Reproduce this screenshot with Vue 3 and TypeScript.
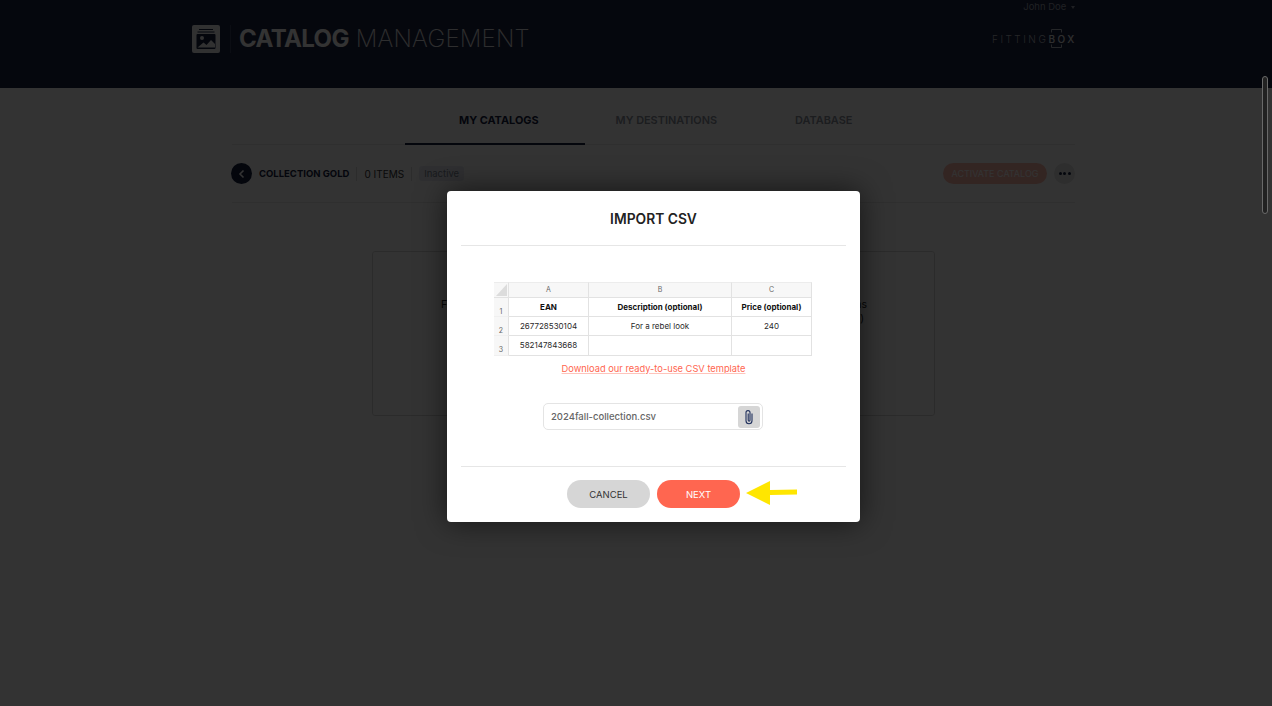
<script setup lang="ts">
interface SheetRow {
  num: number;
  cells: string[];
  bold?: boolean;
}

const tabs = [
  { label: "MY CATALOGS", active: true },
  { label: "MY DESTINATIONS", active: false },
  { label: "DATABASE", active: false },
];

const columns = ["A", "B", "C"];

const rows: SheetRow[] = [
  { num: 1, cells: ["EAN", "Description (optional)", "Price (optional)"], bold: true },
  { num: 2, cells: ["267728530104", "For a rebel look", "240"] },
  { num: 3, cells: ["582147843668", "", ""] },
];
</script>

<template>
  <div class="page">
    <header class="topbar">
      <div class="user">John Doe <span class="caret"></span></div>
      <div class="topbar-row">
        <div class="brand">
          <svg class="brand-icon" width="28" height="28" viewBox="0 0 28 28">
            <rect width="28" height="28" rx="2" fill="#fff" />
            <path d="M7 4.500h14M5.500 7h17" stroke="#14203f" stroke-width="1" fill="none" />
            <rect x="4.500" y="9" width="19" height="15" rx="1" fill="#14203f" />
            <circle cx="10" cy="13" r="2" fill="#fff" />
            <path d="M5.500 22.500l6-5 3 2.500 4.500-5 4 4v3.500z" fill="#fff" />
          </svg>
          <span class="brand-sep"></span>
          <h1 class="brand-title"><b>CATALOG</b> MANAGEMENT</h1>
        </div>
        <div class="fb-logo">
          <span>FITTING</span><span class="fb-box">BOX</span>
          <svg class="fb-frame" width="11" height="19" viewBox="0 0 11 19">
            <path d="M.5 3.500V.5h10v3M.5 15.500v3h10v-3" stroke="#b9bcc6" stroke-width="1" fill="none" />
          </svg>
        </div>
      </div>
    </header>

    <main class="content">
      <nav class="tabs">
        <a v-for="tab in tabs" :key="tab.label" class="tab" :class="{ active: tab.active }">{{ tab.label }}</a>
      </nav>

      <section class="toolbar">
        <span class="back">
          <svg width="12" height="12" viewBox="0 0 12 12">
            <path d="M7.500 2.500L4 6l3.500 3.500" stroke="#fff" stroke-width="1.600" fill="none" />
          </svg>
        </span>
        <strong class="coll-name">COLLECTION GOLD</strong>
        <span class="count">0 ITEMS</span>
        <span class="status">Inactive</span>
        <button class="activate">ACTIVATE CATALOG</button>
        <span class="more"><i></i><i></i><i></i></span>
      </section>

      <!-- mostly hidden by the modal, only the line ends peek out -->
      <section class="empty">
        <p class="empty-line"><span>For</span><span>items</span></p>
        <p class="empty-line second"><span>(optional)</span></p>
      </section>
    </main>

    <div class="overlay">
      <div class="modal">
        <h2 class="modal-title">IMPORT CSV</h2>

        <div class="modal-body">
          <div class="sheet">
            <div class="corner"><i></i></div>
            <div v-for="col in columns" :key="col" class="col-head">{{ col }}</div>
            <template v-for="row in rows" :key="row.num">
              <div class="row-head">{{ row.num }}</div>
              <div v-for="(cell, i) in row.cells" :key="i" class="cell" :class="{ bold: row.bold }">{{ cell }}</div>
            </template>
          </div>
          <a class="template-link">Download our ready-to-use CSV template</a>

          <div class="file-field">
            <span class="file-name">2024fall-collection.csv</span>
            <span class="attach">
              <svg width="12" height="16" viewBox="0 0 12 16">
                <path
                  d="M9 4.500v7.300a3 3 0 0 1-6 0V3.600a2 2 0 0 1 4 0v7.600a.9.9 0 0 1-1.800 0V4.500"
                  stroke="#1f2f5c"
                  stroke-width="1.100"
                  fill="none"
                />
              </svg>
            </span>
          </div>
        </div>

        <div class="modal-foot">
          <button class="btn cancel">CANCEL</button>
          <button class="btn next">NEXT</button>
          <svg class="arrow" width="51" height="26" viewBox="0 0 51 26">
            <path d="M0 13L24 1V10L51 9.500V14.500L24 15V25z" fill="#ffe600" />
          </svg>
        </div>
      </div>
    </div>

    <div class="scroll-thumb"></div>
  </div>
</template>

<style scoped>
.page {
  height: 706px;
  overflow: hidden;
  position: relative;
  background: #fff;
  font-family: Inter, "Open Sans", sans-serif;
  color: #14203f;
}

/* Header */
.topbar {
  height: 88px;
  box-sizing: border-box;
  background: #1c2340;
  padding: 0 197px 0 192px;
  position: relative;
}
.user {
  position: absolute;
  top: 1px;
  right: 197px;
  font-size: 9.500px;
  line-height: 12px;
  color: #9aa0b0;
}
.caret {
  display: inline-block;
  border: 2.500px solid transparent;
  border-top: 3px solid #9aa0b0;
  border-bottom: 0;
  margin: 0 0 1px 2px;
}
.topbar-row {
  padding-top: 25px;
  display: flex;
  align-items: center;
  justify-content: space-between;
}
.brand {
  display: flex;
  align-items: center;
}
.brand-icon {
  opacity: 0.95;
}
.brand-sep {
  width: 1px;
  height: 28px;
  background: #3a4160;
  margin: 0 8px 0 10px;
}
.brand-title {
  margin: 0;
  font-size: 24px;
  line-height: 28px;
  font-weight: 200;
  letter-spacing: 0.200px;
  color: #e4e4e8;
  white-space: nowrap;
}
.brand-title b {
  font-weight: 700;
  color: #fff;
  letter-spacing: -0.600px;
}
.fb-logo {
  position: relative;
  width: 84px;
  margin-right: -1px;
  font-size: 10px;
  letter-spacing: 2.500px;
  line-height: 28px;
  color: #b9bcc6;
  font-weight: 300;
  white-space: nowrap;
}
.fb-box {
  font-weight: 500;
  color: #e8e8ec;
}
.fb-frame {
  position: absolute;
  left: 59px;
  top: 4px;
}

/* Page content */
.content {
  width: 843px;
  margin-left: 232px;
}
.tabs {
  display: flex;
  height: 57px;
  box-sizing: border-box;
  border-bottom: 1px solid #e8e8e8;
  padding-left: 173px;
}
.tab {
  padding: 25px 39px 0;
  font-size: 10.900px;
  line-height: 14px;
  font-weight: 600;
  color: #8a8f9c;
  white-space: nowrap;
}
.tab.active {
  color: #14203f;
  font-weight: 700;
  box-shadow: 0 1px 0 #14203f, inset 0 -1px 0 #14203f;
  padding-left: 54px;
  padding-right: 46px;
  margin-right: -8px;
}
.toolbar {
  display: flex;
  align-items: center;
  height: 58px;
  box-sizing: border-box;
  border-bottom: 1px solid #e8e8e8;
  font-size: 9.500px;
}
.back {
  width: 21px;
  height: 21px;
  border-radius: 50%;
  background: #14203f;
  display: flex;
  align-items: center;
  justify-content: center;
  margin-left: -1px;
}
.coll-name {
  margin-left: 7px;
  padding-right: 7px;
  border-right: 1px solid #ddd;
  line-height: 14px;
  font-size: 9.500px;
}
.count {
  margin-left: 7px;
  padding-right: 7px;
  border-right: 1px solid #ddd;
  line-height: 14px;
  font-size: 10px;
  color: #333;
}
.status {
  margin-left: 7px;
  padding: 0 5px;
  height: 15px;
  line-height: 15px;
  border-radius: 3px;
  background: #e8ecf3;
  color: #7d8494;
}
.activate {
  margin-left: auto;
  width: 104px;
  height: 21px;
  border: 0;
  border-radius: 11px;
  padding: 0;
  background: #ffb8ac;
  color: #fff;
  font: 400 9px Inter, sans-serif;
}
.more {
  width: 21px;
  height: 21px;
  margin-left: 7px;
  border-radius: 50%;
  background: #e4e4e4;
  display: flex;
  gap: 1.500px;
  align-items: center;
  justify-content: center;
}
.more i {
  width: 3px;
  height: 3px;
  border-radius: 50%;
  background: #14203f;
}
.empty {
  margin: 48px 0 0 140px;
  width: 563px;
  height: 165px;
  box-sizing: border-box;
  border: 1px solid #d8d8d8;
  border-radius: 3px;
  padding: 46px 67px 0 68px;
}
.empty-line {
  margin: 0;
  display: flex;
  justify-content: space-between;
  font-size: 10.500px;
  line-height: 14px;
  color: #222;
}
.empty-line.second {
  justify-content: flex-end;
  padding-right: 3px;
}

/* Modal */
.overlay {
  position: absolute;
  inset: 0;
  background: rgba(0, 0, 0, 0.8);
  padding: 191px 0 0 447px;
}
.modal {
  width: 413px;
  height: 331px;
  box-sizing: border-box;
  padding: 0 14px;
  background: #fff;
  border-radius: 4px;
  box-shadow: 0 0 30px rgba(0, 0, 0, 0.6);
  display: flex;
  flex-direction: column;
}
.modal-title {
  margin: 0;
  height: 55px;
  box-sizing: border-box;
  padding-top: 20px;
  border-bottom: 1px solid #e6e6e6;
  text-align: center;
  font-size: 13.800px;
  line-height: 16px;
  font-weight: 600;
  color: #222;
}
.modal-body {
  flex: 1;
  display: flex;
  flex-direction: column;
  align-items: center;
  border-bottom: 1px solid #e6e6e6;
  padding-top: 36px;
}
.sheet {
  display: grid;
  grid-template-columns: 15px 80px 143px 80px;
  grid-template-rows: 16px 19px 19px 20px;
  width: 318px;
  margin-left: -1px;
  font-size: 8px;
  color: #2a2a2a;
  flex-shrink: 0;
}
.corner,
.col-head {
  background: #f7f7f7;
  border-top: 1px solid #ececec;
  border-right: 1px solid #e2e2e2;
  border-bottom: 1px solid #e2e2e2;
  box-sizing: border-box;
  text-align: center;
  line-height: 14px;
  font-size: 7px;
  color: #666;
}
.corner {
  position: relative;
}
.corner i {
  position: absolute;
  inset: 1px 1px 1px 2px;
  background: #dcdcdc;
  clip-path: polygon(100% 0, 100% 100%, 0 100%);
}
.row-head {
  background: #f7f7f7;
  border-right: 1px solid #e2e2e2;
  border-bottom: 1px solid #f0f0f0;
  box-sizing: border-box;
  text-align: center;
  font-size: 7px;
  color: #666;
  padding-top: 9px;
  line-height: 9px;
}
.cell {
  border-right: 1px solid #e2e2e2;
  border-bottom: 1px solid #e2e2e2;
  box-sizing: border-box;
  text-align: center;
  line-height: 18px;
  white-space: nowrap;
}
.cell.bold {
  font-weight: 700;
  color: #111;
}
.template-link {
  margin-top: 7px;
  font-size: 9.300px;
  line-height: 12px;
  color: #ff6650;
  text-decoration: underline;
  text-decoration-color: #ffc4bb;
}
.file-field {
  margin: 28px 0 0 -1px;
  width: 220px;
  height: 27px;
  box-sizing: border-box;
  border: 1px solid #e4e4e4;
  border-radius: 5px;
  padding: 2px 2px 2px 7px;
  display: flex;
  align-items: center;
  justify-content: space-between;
}
.file-name {
  font-size: 9.500px;
  font-weight: 500;
  color: #666;
}
.attach {
  width: 22px;
  height: 22px;
  border-radius: 3px;
  background: #d6d6d6;
  display: flex;
  align-items: center;
  justify-content: center;
}
.modal-foot {
  height: 55px;
  box-sizing: border-box;
  display: flex;
  align-items: flex-start;
  padding: 13px 0 0 106px;
  gap: 7px;
  flex-shrink: 0;
}
.btn {
  width: 83px;
  height: 28px;
  border: 0;
  border-radius: 14px;
  padding: 0;
  font: 400 9.500px Inter, sans-serif;
}
.cancel {
  background: #d6d6d6;
  color: #333;
}
.next {
  background: #ff6650;
  color: #fff;
}
.arrow {
  margin-left: -1px;
}

/* Scrollbar thumb */
.scroll-thumb {
  position: absolute;
  top: 76px;
  left: 1262px;
  width: 6px;
  height: 138px;
  box-sizing: border-box;
  border: 1px solid #6a6a6a;
  border-radius: 3px;
  background: #222;
}
</style>
